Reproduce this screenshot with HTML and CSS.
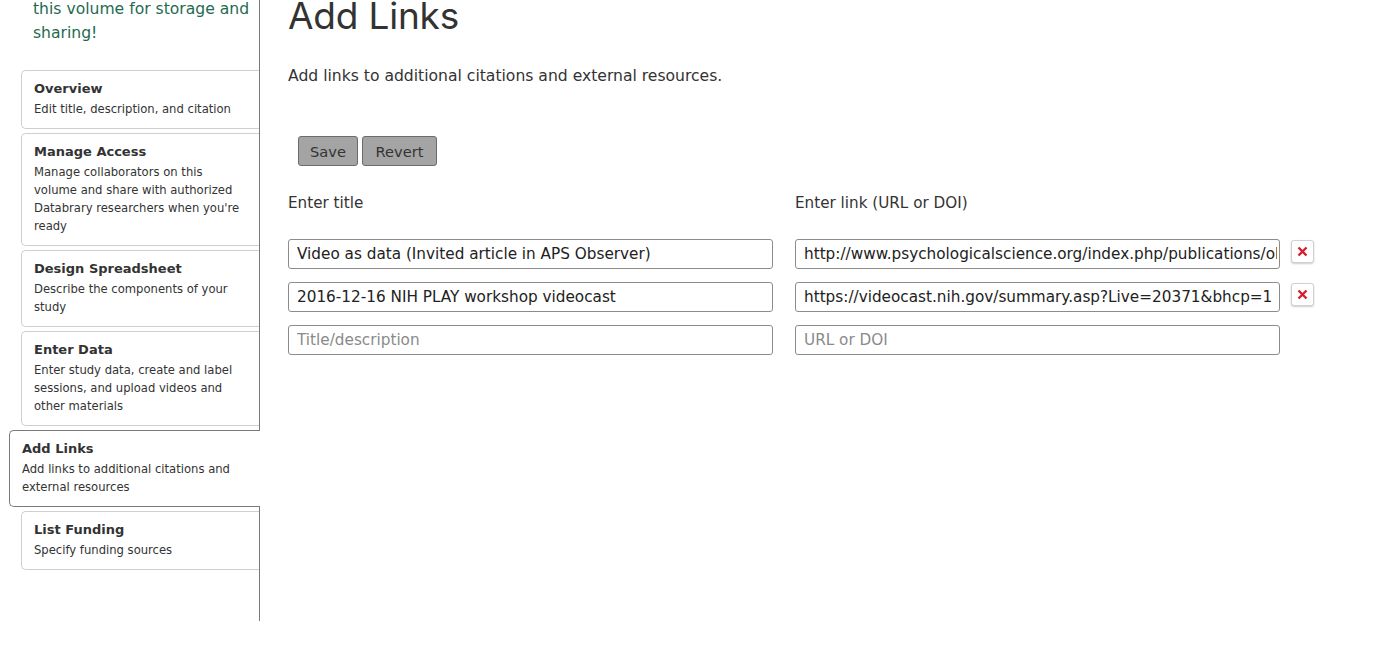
FILE: index.html
```html
<!DOCTYPE html>
<html>
<head>
<meta charset="utf-8">
<link rel="stylesheet" href="styles.css">
</head>
<body>
<div class="page">
  <aside class="sidebar">
    <p class="intro">this volume for storage and sharing!</p>
    <ul class="steps">
      <li class="step"><div class="step-title">Overview</div><div class="step-desc">Edit title, description, and citation</div></li>
      <li class="step"><div class="step-title">Manage Access</div><div class="step-desc">Manage collaborators on this volume and share with authorized Databrary researchers when you're ready</div></li>
      <li class="step"><div class="step-title">Design Spreadsheet</div><div class="step-desc">Describe the components of your study</div></li>
      <li class="step"><div class="step-title">Enter Data</div><div class="step-desc">Enter study data, create and label sessions, and upload videos and other materials</div></li>
      <li class="step active"><div class="step-title">Add Links</div><div class="step-desc">Add links to additional citations and external resources</div></li>
      <li class="step"><div class="step-title">List Funding</div><div class="step-desc">Specify funding sources</div></li>
    </ul>
  </aside>
  <main class="main">
    <h1 class="heading">Add Links</h1>
    <p class="lead">Add links to additional citations and external resources.</p>
    <div class="actions">
      <button class="btn">Save</button>
      <button class="btn">Revert</button>
    </div>
    <div class="labels">
      <div class="label">Enter title</div>
      <div class="label">Enter link (URL or DOI)</div>
    </div>
    <div class="rows">
      <div class="row">
        <input class="field" type="text" value="Video as data (Invited article in APS Observer)">
        <input class="field link" type="text" value="http://www.psychologicalscience.org/index.php/publications/observer/2014/may-june-14/video-as-data.html">
        <button class="remove" aria-label="Remove"><svg width="11" height="11" viewBox="0 0 11 11"><path d="M1.5 1.5 L9.5 9.5 M9.5 1.5 L1.5 9.5" stroke="#d4202b" stroke-width="2.4" stroke-linecap="butt"/></svg></button>
      </div>
      <div class="row">
        <input class="field" type="text" value="2016-12-16 NIH PLAY workshop videocast">
        <input class="field link" type="text" value="https://videocast.nih.gov/summary.asp?Live=20371&amp;bhcp=1">
        <button class="remove" aria-label="Remove"><svg width="11" height="11" viewBox="0 0 11 11"><path d="M1.5 1.5 L9.5 9.5 M9.5 1.5 L1.5 9.5" stroke="#d4202b" stroke-width="2.4" stroke-linecap="butt"/></svg></button>
      </div>
      <div class="row">
        <input class="field" type="text" placeholder="Title/description">
        <input class="field link" type="text" placeholder="URL or DOI">
      </div>
    </div>
  </main>
</div>
</body>
</html>
```

FILE: styles.css
```css
html, body {
  margin: 0;
  padding: 0;
  background: #fff;
}
body {
  font-family: "DejaVu Sans", "Open Sans", sans-serif;
  color: #333;
  overflow: hidden;
}
.page {
  display: flex;
  align-items: flex-start;
}
.sidebar {
  width: 259px;
  height: 621px;
  border-right: 1px solid #7a7a7a;
  flex-shrink: 0;
}
.intro {
  margin: -3px 8px 0 33px;
  font-size: 15.6px;
  line-height: 24px;
  color: #1f6a51;
}
.steps {
  list-style: none;
  margin: 25px 0 0 0;
  padding: 0;
  display: flex;
  flex-direction: column;
  gap: 4px;
}
.step {
  margin-left: 21px;
  border: 1px solid #cfcfcf;
  border-right: none;
  border-radius: 5px 0 0 5px;
  padding: 8px 14px 10px 12px;
  background: #fff;
}
.step.active {
  margin-left: 9px;
  margin-right: -1px;
  border-color: #7a7a7a;
  position: relative;
}
.step-title {
  font-size: 13px;
  font-weight: 700;
  line-height: 20px;
  color: #333;
}
.step-desc {
  margin-top: 1px;
  font-size: 11.6px;
  line-height: 18px;
  color: #333;
}
.main {
  padding-left: 28px;
  flex: 1;
}
.heading {
  margin: -6px 0 0 0;
  font-family: Inter, "Open Sans", sans-serif;
  font-weight: 400;
  font-size: 37px;
  line-height: 44px;
  color: #333;
  letter-spacing: -0.2px;
}
.lead {
  margin: 27px 0 0 0;
  font-size: 15.6px;
  line-height: 22px;
}
.actions {
  margin: 49px 0 0 10px;
  display: flex;
  gap: 4px;
}
.btn {
  height: 30px;
  padding: 0;
  background: #a4a4a4;
  border: 1px solid #6c6c6c;
  border-radius: 3px;
  font-family: "DejaVu Sans", "Open Sans", sans-serif;
  font-size: 14.6px;
  color: #333;
}
.btn:first-child { width: 60px; }
.btn:last-child { width: 75px; }
.labels {
  margin-top: 26px;
  display: flex;
  gap: 22px;
}
.label {
  width: 485px;
  font-size: 15.2px;
  line-height: 22px;
}
.rows {
  margin-top: 25px;
  display: flex;
  flex-direction: column;
  gap: 13px;
}
.row {
  display: flex;
  align-items: flex-start;
  gap: 22px;
}
.field {
  box-sizing: border-box;
  width: 485px;
  height: 30px;
  margin: 0;
  padding: 0 2px 0 8px;
  border: 1px solid #8c8c8c;
  border-radius: 3px;
  font-family: "DejaVu Sans", "Open Sans", sans-serif;
  font-size: 15.25px;
  color: #222;
  background: #fff;
  outline: none;
}
.field::placeholder {
  color: #8a8a8a;
}
.remove {
  margin-left: -11px;
  margin-top: 1px;
  width: 23px;
  height: 23px;
  padding: 0;
  display: flex;
  align-items: center;
  justify-content: center;
  background: #fff;
  border: 1px solid #d0d0d0;
  border-radius: 3px;
  box-shadow: 0 1px 2px rgba(0,0,0,0.2);
}
```
